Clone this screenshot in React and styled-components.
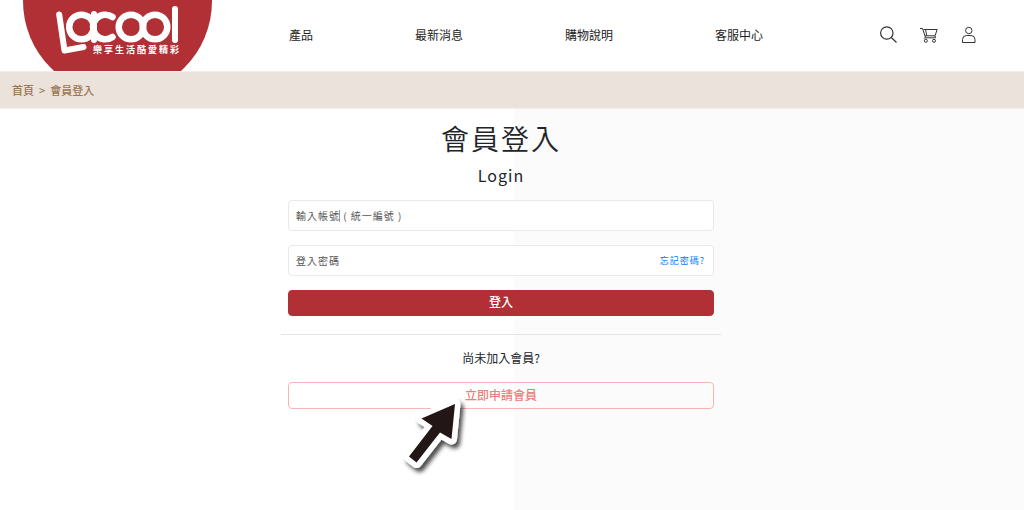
import React from "react";
import styled, { createGlobalStyle } from "styled-components";

const GlobalStyle = createGlobalStyle`
  *, *::before, *::after { box-sizing: border-box; }
  body {
    margin: 0;
    font-family: "Noto Sans CJK TC", "Noto Sans", sans-serif;
    font-size: 12px;
    line-height: 20px;
    color: #212529;
    background: #fff;
  }
`;

const Page = styled.div`
  min-height: 100vh;
  display: flex;
  flex-direction: column;
`;

const Header = styled.header`
  height: 71px;
  display: flex;
  align-items: center;
  padding: 0 46px 0 23px;
`;

const LogoLink = styled.a`
  position: relative;
  flex: none;
  width: 189px;
  height: 71px;
  margin-right: 77px;
  svg { display: block; }
`;

const Tagline = styled.span`
  position: absolute;
  left: 70px;
  top: 44px;
  font-size: 9px;
  line-height: 12px;
  font-weight: 700;
  letter-spacing: 2px;
  color: #fff;
  white-space: nowrap;
`;

const Nav = styled.nav`
  display: flex;
  gap: 102px;
  flex: 1;
  padding-bottom: 2px;
`;

const NavLink = styled.a`
  color: #222;
  text-decoration: none;
  white-space: nowrap;
`;

const Tools = styled.div`
  display: flex;
  gap: 22px;
  padding-bottom: 2px;
`;

const IconButton = styled.button`
  border: 0;
  padding: 0;
  background: none;
  width: 18px;
  height: 18px;
  color: #333;
  svg { display: block; }
`;

const Breadcrumb = styled.nav`
  height: 38px;
  padding: 0 12px;
  display: flex;
  align-items: center;
  gap: 5px;
  font-size: 11px;
  font-weight: 500;
  color: #9b7650;
  background: #ebe2dc;
  border: solid #f3eeea;
  border-width: 1px 0;
  a { color: inherit; text-decoration: none; }
`;

const Main = styled.main`
  flex: 1;
  display: flex;
  flex-direction: column;
  align-items: center;
  padding: 9px 22px 40px 0;
  background: linear-gradient(to right, #fff calc(50% + 2px), #fbfbfb calc(50% + 2px));
`;

const Title = styled.h1`
  margin: 0;
  font-size: 28px;
  line-height: 40px;
  font-weight: 350;
  letter-spacing: 2px;
`;

const Subtitle = styled.h2`
  margin: 6px 0 14px;
  font-size: 16px;
  line-height: 22px;
  font-weight: 400;
  letter-spacing: 1px;
`;

const Form = styled.form`
  width: 100%;
  max-width: 426px;
  display: flex;
  flex-direction: column;
  gap: 14px;
`;

const Field = styled.div`
  position: relative;
  display: flex;
  align-items: center;
  height: 31px;
  background: #fff;
  border: 1px solid #e9e9e9;
  border-radius: 4px;
  padding: 0 8px 0 7px;
`;

const Input = styled.input`
  flex: 1;
  min-width: 0;
  height: 29px;
  border: 0;
  padding: 0 0 1px;
  outline: 0;
  background: none;
  font-family: inherit;
  font-size: 10px;
  letter-spacing: 1px;
  color: #555;
  &::placeholder { color: #555; opacity: 1; }
`;

const Caret = styled.span`
  position: absolute;
  left: 50px;
  top: 9px;
  width: 1px;
  height: 12px;
  background: #999;
`;

const ForgotLink = styled.a`
  font-size: 9px;
  letter-spacing: 1px;
  color: #007bff;
  text-decoration: none;
`;

const Button = styled.button`
  width: 100%;
  height: ${(p) => (p.$outline ? "27px" : "26px")};
  padding: 0 0 2px;
  border: 1px solid ${(p) => (p.$outline ? "#f5b5b5" : "#b03035")};
  border-radius: 4px;
  background: ${(p) => (p.$outline ? "transparent" : "#b03035")};
  color: ${(p) => (p.$outline ? "#ee7d7d" : "#fff")};
  font-family: inherit;
  font-size: 12px;
  line-height: 20px;
  font-weight: 500;
`;

const Divider = styled.hr`
  width: 100%;
  max-width: 440px;
  margin: 18px 0 13px;
  border: 0;
  border-top: 1px solid #e5e5e5;
`;

const Join = styled.section`
  position: relative;
  width: 100%;
  max-width: 426px;
  text-align: center;
  p { margin: 0 0 14px; }
`;

const Pointer = styled.svg`
  position: absolute;
  left: 50%;
  top: 44px;
  margin-left: -105px;
  pointer-events: none;
`;

const Logo = () => (
  <svg width="189" height="71" viewBox="23 0 189 71" aria-hidden="true">
    <circle cx="117.5" cy="1" r="94.5" fill="#b03035" />
    <g fill="none" stroke="#fff" strokeWidth="6.5" strokeLinecap="round" strokeLinejoin="round">
      <path d="M59.200 14.500L64.500 50.500L83.500 47" strokeWidth="6" />
      <circle cx="81.500" cy="27" r="12.300" />
      <path d="M94 14V40" strokeWidth="6" />
      <path d="M112.500 17A12.300 12.300 0 1 0 112.500 37" />
      <circle cx="131" cy="27" r="12.300" />
      <circle cx="155" cy="27" r="12.300" />
      <path d="M175 9V40" strokeWidth="6" />
    </g>
  </svg>
);

const SearchIcon = () => (
  <svg width="18" height="18" viewBox="0 0 18 18" fill="none" stroke="currentColor" strokeWidth="1.2">
    <circle cx="6.800" cy="7" r="6.200" />
    <path d="M11.300 11.500L16.500 16.500" />
  </svg>
);

const CartIcon = () => (
  <svg width="18" height="18" viewBox="0 0 18 18" fill="none" stroke="currentColor" strokeWidth="1">
    <path d="M0 2.500H2.500L5.500 11.500M3.500 3.500H17.200L15 9.800H5M5.500 3.500L6.800 9.800M15 9.800L15.500 11.800H4.500L4.200 12.500" />
    <circle cx="5.800" cy="14.800" r="1.500" />
    <circle cx="14" cy="14.800" r="1.500" />
  </svg>
);

const UserIcon = () => (
  <svg width="18" height="18" viewBox="0 0 18 18" fill="none" stroke="currentColor" strokeWidth="1">
    <circle cx="8.800" cy="4.500" r="3.200" />
    <path d="M2.500 16.500V13.500Q2.500 9.500 6.500 9.500H11Q15 9.500 15 13.500V16.500Z" />
  </svg>
);

const ArrowPointer = () => (
  <Pointer width="72" height="92" viewBox="396 392 72 92" aria-hidden="true">
    <defs>
      <filter id="arrow-shadow" x="-30%" y="-30%" width="170%" height="170%">
        <feDropShadow dx="3" dy="4" stdDeviation="2" floodColor="#000" floodOpacity="0.7" />
      </filter>
    </defs>
    <path
      d="M455 404L421.500 418.500L432.500 426L409 456.500L416.500 462.500L440 432.500L451.500 439Z"
      fill="#231815"
      stroke="#fff"
      strokeWidth="11"
      strokeLinejoin="round"
      paintOrder="stroke"
      filter="url(#arrow-shadow)"
    />
  </Pointer>
);

export default function App() {
  return (
    <Page>
      <GlobalStyle />
      <Header>
        <LogoLink href="#" aria-label="Lacool">
          <Logo />
          <Tagline>樂享生活酷愛精彩</Tagline>
        </LogoLink>
        <Nav>
          <NavLink href="#">產品</NavLink>
          <NavLink href="#">最新消息</NavLink>
          <NavLink href="#">購物說明</NavLink>
          <NavLink href="#">客服中心</NavLink>
        </Nav>
        <Tools>
          <IconButton type="button" aria-label="搜尋"><SearchIcon /></IconButton>
          <IconButton type="button" aria-label="購物車"><CartIcon /></IconButton>
          <IconButton type="button" aria-label="會員"><UserIcon /></IconButton>
        </Tools>
      </Header>
      <Breadcrumb>
        <a href="#">首頁</a>
        <span>&gt;</span>
        <span>會員登入</span>
      </Breadcrumb>
      <Main>
        <Title>會員登入</Title>
        <Subtitle>Login</Subtitle>
        <Form onSubmit={(e) => e.preventDefault()}>
          <Field>
            <Input type="text" aria-label="輸入帳號" placeholder="輸入帳號 ( 統一編號 )" />
            <Caret />
          </Field>
          <Field>
            <Input type="password" aria-label="登入密碼" placeholder="登入密碼" />
            <ForgotLink href="#">忘記密碼?</ForgotLink>
          </Field>
          <Button type="submit">登入</Button>
        </Form>
        <Divider />
        <Join>
          <p>尚未加入會員?</p>
          <Button type="button" $outline>立即申請會員</Button>
          <ArrowPointer />
        </Join>
      </Main>
    </Page>
  );
}
